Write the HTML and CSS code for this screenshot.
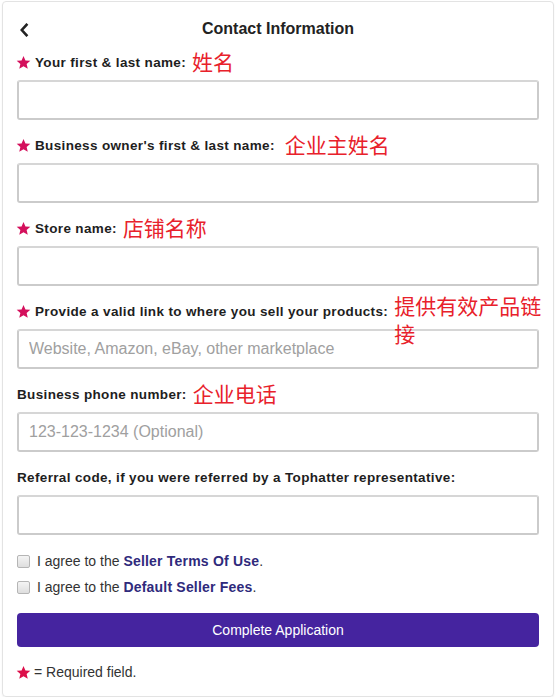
FILE: index.html
```html
<!DOCTYPE html>
<html lang="en">
<head>
<meta charset="utf-8">
<title>Contact Information</title>
<link rel="stylesheet" href="styles.css">
</head>
<body>
<div class="card">
  <header class="header">
    <span class="back">
      <svg width="10" height="14" viewBox="0 0 10 14"><path d="M7.5 1.8 L2.8 7 L7.5 12.2" fill="none" stroke="#222" stroke-width="2.6" stroke-linecap="square"/></svg>
    </span>
    <h1 class="title">Contact Information</h1>
  </header>

  <form class="form">
    <div class="field">
      <div class="label-row">
        <svg class="star" viewBox="0 0 24 24"><path d="M12 1.5l3.1 7.2 7.8.6-5.9 5.1 1.8 7.6L12 17.9 5.2 22l1.8-7.6L1.1 9.3l7.8-.6z"/></svg>
        <label class="label">Your first &amp; last name:</label>
        <span class="note">姓名</span>
      </div>
      <input class="input" type="text">
    </div>

    <div class="field">
      <div class="label-row">
        <svg class="star" viewBox="0 0 24 24"><path d="M12 1.5l3.1 7.2 7.8.6-5.9 5.1 1.8 7.6L12 17.9 5.2 22l1.8-7.6L1.1 9.3l7.8-.6z"/></svg>
        <label class="label">Business owner's first &amp; last name:</label>
        <span class="note note-far">企业主姓名</span>
      </div>
      <input class="input" type="text">
    </div>

    <div class="field">
      <div class="label-row">
        <svg class="star" viewBox="0 0 24 24"><path d="M12 1.5l3.1 7.2 7.8.6-5.9 5.1 1.8 7.6L12 17.9 5.2 22l1.8-7.6L1.1 9.3l7.8-.6z"/></svg>
        <label class="label">Store name:</label>
        <span class="note">店铺名称</span>
      </div>
      <input class="input" type="text">
    </div>

    <div class="field">
      <div class="label-row">
        <svg class="star" viewBox="0 0 24 24"><path d="M12 1.5l3.1 7.2 7.8.6-5.9 5.1 1.8 7.6L12 17.9 5.2 22l1.8-7.6L1.1 9.3l7.8-.6z"/></svg>
        <label class="label">Provide a valid link to where you sell your products:</label>
        <span class="note note-wrap">提供有效产品链接</span>
      </div>
      <input class="input" type="text" placeholder="Website, Amazon, eBay, other marketplace">
    </div>

    <div class="field">
      <div class="label-row">
        <label class="label label-plain">Business phone number:</label>
        <span class="note">企业电话</span>
      </div>
      <input class="input" type="text" placeholder="123-123-1234 (Optional)">
    </div>

    <div class="field field-last">
      <div class="label-row">
        <label class="label label-plain">Referral code, if you were referred by a Tophatter representative:</label>
      </div>
      <input class="input" type="text">
    </div>

    <label class="check-row check-first">
      <input class="check" type="checkbox">
      <span>I agree to the <a class="link" href="#">Seller Terms Of Use</a>.</span>
    </label>
    <label class="check-row">
      <input class="check" type="checkbox">
      <span>I agree to the <a class="link" href="#">Default Seller Fees</a>.</span>
    </label>

    <button class="submit" type="button">Complete Application</button>

    <p class="footnote">
      <svg class="star star-foot" viewBox="0 0 24 24"><path d="M12 1.5l3.1 7.2 7.8.6-5.9 5.1 1.8 7.6L12 17.9 5.2 22l1.8-7.6L1.1 9.3l7.8-.6z"/></svg>
      <span>= Required field.</span>
    </p>
  </form>
</div>
</body>
</html>
```

FILE: styles.css
```css
html, body {
  margin: 0;
  padding: 0;
  background: #ffffff;
}

body {
  font-family: "Liberation Sans", Arial, sans-serif;
  color: #222222;
}

.card {
  margin: 1px 2px 0 2px;
  width: 552px;
  border: 1px solid #e3e3e3;
  border-radius: 4px;
  padding: 0 14px 14px 14px;
  box-sizing: border-box;
  box-shadow: 0 1px 2px rgba(0, 0, 0, 0.06);
}

.header {
  display: flex;
  align-items: center;
  padding-top: 17px;
  height: 20px;
  margin-bottom: 15px;
  box-sizing: content-box;
}

.back {
  display: flex;
  align-items: center;
  margin-left: 2px;
  margin-top: 2px;
}

.title {
  flex: 1;
  margin: 0 0 0 -12px;
  text-align: center;
  font-size: 16px;
  line-height: 20px;
  font-weight: 700;
  color: #222222;
}

.form {
  margin: 0;
}

.field {
  margin-bottom: 17px;
}

.field-last {
  margin-bottom: 16px;
}

.label-row {
  display: flex;
  align-items: flex-start;
  height: 18px;
  margin-bottom: 8px;
}

.star {
  width: 15px;
  height: 15px;
  fill: #d4105c;
  flex: none;
  margin-top: 1px;
  margin-left: -1px;
  margin-right: 4px;
}

.label {
  font-size: 13.5px;
  line-height: 18px;
  font-weight: 700;
  color: #1e1e1e;
  letter-spacing: 0.35px;
  white-space: nowrap;
}

.note {
  font-family: "Noto Sans CJK SC", "Microsoft YaHei", sans-serif;
  font-size: 21px;
  line-height: 28px;
  color: #e8212b;
  margin-left: 6px;
  margin-top: -7px;
  min-width: 0;
}

.note-far {
  margin-left: 10px;
}

.note-wrap {
  margin-top: -12px;
  margin-right: -6px;
  flex: 1;
}

.input {
  display: block;
  width: 100%;
  height: 40px;
  box-sizing: border-box;
  border: 2px solid #cbcbcb;
  border-top-color: #d6d6d6;
  border-radius: 3px;
  padding: 0 10px;
  font-family: "Liberation Sans", Arial, sans-serif;
  font-size: 16px;
  color: #333333;
  background: #ffffff;
  margin: 0;
  outline: none;
}

.input::placeholder {
  color: #a0a0a0;
}

.check-row {
  display: flex;
  align-items: center;
  height: 20px;
  font-size: 14px;
  color: #333333;
  margin-bottom: 6px;
  cursor: pointer;
}

.check {
  appearance: none;
  -webkit-appearance: none;
  width: 13px;
  height: 13px;
  margin: 0 7px 0 0;
  border: 1px solid #b5b5b5;
  border-radius: 2px;
  background: linear-gradient(#f4f4f4, #dedede);
  box-sizing: border-box;
  flex: none;
}

.link {
  color: #2f2a7c;
  font-weight: 700;
  text-decoration: none;
  letter-spacing: 0.2px;
}

.submit {
  display: block;
  width: 100%;
  height: 34px;
  margin-top: 16px;
  border: none;
  border-radius: 4px;
  background: #45249f;
  color: #ffffff;
  font-family: "Liberation Sans", Arial, sans-serif;
  font-size: 14px;
  cursor: pointer;
}

.footnote {
  display: flex;
  align-items: center;
  margin: 15px 0 0 0;
  height: 20px;
  font-size: 14px;
  color: #333333;
}

.star-foot {
  margin-top: 0;
  margin-right: 3px;
  fill: #dc0f4a;
}
```
